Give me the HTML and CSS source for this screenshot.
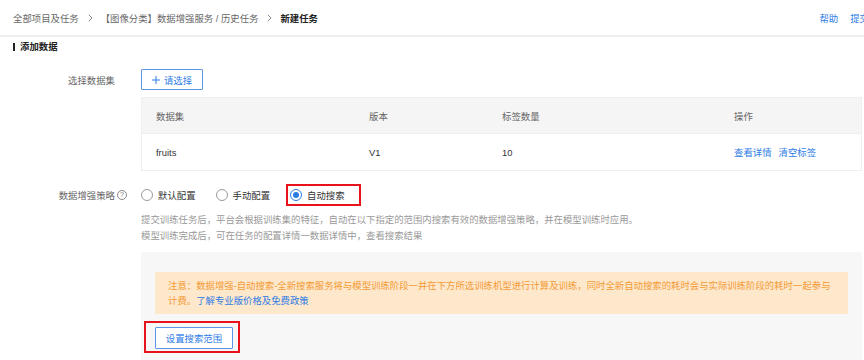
FILE: index.html
```html
<!DOCTYPE html>
<html lang="zh">
<head>
<meta charset="utf-8">
<title>新建任务</title>
<link rel="stylesheet" href="styles.css">
</head>
<body>
<header class="header">
  <nav class="crumbs">
    <span class="crumb">全部项目及任务</span>
    <svg class="sep" width="5" height="8" viewBox="0 0 5 8"><path d="M0.8 0.8 L4 4 L0.8 7.2" fill="none" stroke="#888" stroke-width="1"/></svg>
    <span class="crumb">【图像分类】数据增强服务 / 历史任务</span>
    <svg class="sep" width="5" height="8" viewBox="0 0 5 8"><path d="M0.8 0.8 L4 4 L0.8 7.2" fill="none" stroke="#888" stroke-width="1"/></svg>
    <span class="crumb current">新建任务</span>
  </nav>
  <div class="actions">
    <a class="link">帮助</a>
    <a class="link">提交</a>
  </div>
</header>

<main>
  <h2 class="section-title">添加数据</h2>

  <div class="form-row row-select">
    <div class="label">选择数据集</div>
    <div class="content">
      <button class="btn-outline btn-select">
        <svg width="8" height="8" viewBox="0 0 8 8"><path d="M4 0 V8 M0 4 H8" stroke="#2d7be5" stroke-width="1"/></svg>
        <span>请选择</span>
      </button>
    </div>
  </div>

  <div class="form-row row-table">
    <div class="label"></div>
    <div class="content">
      <div class="table">
        <div class="tr thead">
          <div class="td">数据集</div>
          <div class="td">版本</div>
          <div class="td">标签数量</div>
          <div class="td">操作</div>
        </div>
        <div class="tr tbody">
          <div class="td">fruits</div>
          <div class="td">V1</div>
          <div class="td">10</div>
          <div class="td ops"><a class="link">查看详情</a><a class="link">清空标签</a></div>
        </div>
      </div>
    </div>
  </div>

  <div class="form-row row-strategy">
    <div class="label">数据增强策略<span class="qicon">?</span></div>
    <div class="content radios">
      <label class="radio"><span class="circle"></span>默认配置</label>
      <label class="radio"><span class="circle"></span>手动配置</label>
      <span class="mark mark-radio"><label class="radio"><span class="circle checked"></span>自动搜索</label></span>
    </div>
  </div>

  <div class="form-row row-desc">
    <div class="label"></div>
    <div class="content desc">
      <div>提交训练任务后，平台会根据训练集的特征，自动在以下指定的范围内搜索有效的数据增强策略，并在模型训练时应用。</div>
      <div>模型训练完成后，可在任务的配置详情一数据详情中，查看搜索结果</div>
    </div>
  </div>

  <div class="form-row row-panel">
    <div class="label"></div>
    <div class="content panel">
      <div class="notice">注意：数据增强-自动搜索-全新搜索服务将与模型训练阶段一并在下方所选训练机型进行计算及训练，同时全新自动搜索的耗时会与实际训练阶段的耗时一起参与<br>计费。<a class="link">了解专业版价格及免费政策</a></div>
      <span class="mark mark-btn"><button class="btn-outline btn-range">设置搜索范围</button></span>
    </div>
  </div>
</main>
</body>
</html>
```

FILE: styles.css
```css
* { box-sizing: border-box; }
html, body { margin: 0; padding: 0; }
body {
  width: 864px;
  height: 360px;
  overflow: hidden;
  background: #fff;
  font-family: "Liberation Sans", "Noto Sans CJK SC", sans-serif;
  font-size: 9.4px;
  color: #333;
}
.link { color: #2d7be5; text-decoration: none; cursor: pointer; }

.header {
  height: 37px;
  border-bottom: 2px solid #efefef;
  display: flex;
  align-items: center;
  justify-content: space-between;
  padding-left: 13px;
}
.crumbs { display: flex; align-items: center; color: #666; }
.sep { margin: 0 8px 0 9px; }
.current { color: #222; font-weight: bold; }
.actions { display: flex; gap: 12px; margin-right: -5px; }

.section-title {
  margin: 1px 0 0;
  height: 18px;
  line-height: 18px;
  font-size: 9.4px;
  font-weight: bold;
  color: #222;
  display: flex;
  align-items: center;
}
.section-title::before {
  content: "";
  width: 2px;
  height: 8px;
  background: #222;
  margin: 0 5px 0 13px;
}

.form-row { display: flex; gap: 26px; padding-right: 2px; }
.label {
  width: 115px;
  flex: none;
  text-align: right;
  color: #666;
  display: flex;
  justify-content: flex-end;
  align-items: center;
}
.content { flex: 1; min-width: 0; }

.row-select { margin-top: 13px; height: 21px; align-items: center; }
.btn-outline {
  font-family: inherit;
  font-size: 9.4px;
  color: #2d7be5;
  background: #fff;
  border: 1px solid #5b96ea;
  border-radius: 1px;
  padding: 0;
  display: inline-flex;
  align-items: center;
  justify-content: center;
}
.btn-select { width: 62px; height: 21px; gap: 4px; }

.row-table { margin-top: 7px; }
.table { border: 1px solid #efefef; }
.tr { display: grid; grid-template-columns: 213px 133px 232px 1fr; align-items: center; }
.thead { height: 36px; background: #f5f5f5; color: #666; border-bottom: 1px solid #efefef; }
.tbody { height: 36px; color: #333; }
.td { padding-left: 14px; }
.ops { display: flex; gap: 7px; }

.row-strategy { margin-top: 13px; height: 22px; align-items: center; }
.qicon {
  width: 10px;
  height: 10px;
  border: 1px solid #888;
  border-radius: 50%;
  font-size: 7px;
  line-height: 8px;
  text-align: center;
  color: #777;
  margin-left: 2px;
  margin-right: -12px;
}
.radios { display: flex; align-items: center; }
.radio { display: inline-flex; align-items: center; gap: 5px; color: #333; }
.radios > .radio { margin-right: 20px; }
.radios > .radio + .radio { margin-right: 16px; }
.circle {
  width: 12px;
  height: 12px;
  border: 1px solid #9a9a9a;
  border-radius: 50%;
  background: #fff;
  display: inline-flex;
  align-items: center;
  justify-content: center;
}
.circle.checked { border-color: #2d7be5; }
.circle.checked::after {
  content: "";
  width: 6px;
  height: 6px;
  border-radius: 50%;
  background: #2d7be5;
}
.mark { border: 2px solid #e8121c; display: inline-flex; align-items: center; }
.mark-radio { height: 22px; padding: 0 14px 0 2px; }

.row-desc { margin-top: 6px; }
.desc { color: #999; line-height: 16px; white-space: nowrap; }

.row-panel { margin-top: 8px; }
.panel { background: #f7f7f7; padding: 20px 14px 20px 14px; height: 120px; }
.notice {
  background: #fee8cc;
  color: #f39a35;
  line-height: 15px;
  padding: 6px 13px;
  white-space: nowrap;
}
.mark-btn { margin: 7px 0 0 -11px; padding: 4px 5px 2px 9px; }
.btn-range { width: 78px; height: 22px; }
```
